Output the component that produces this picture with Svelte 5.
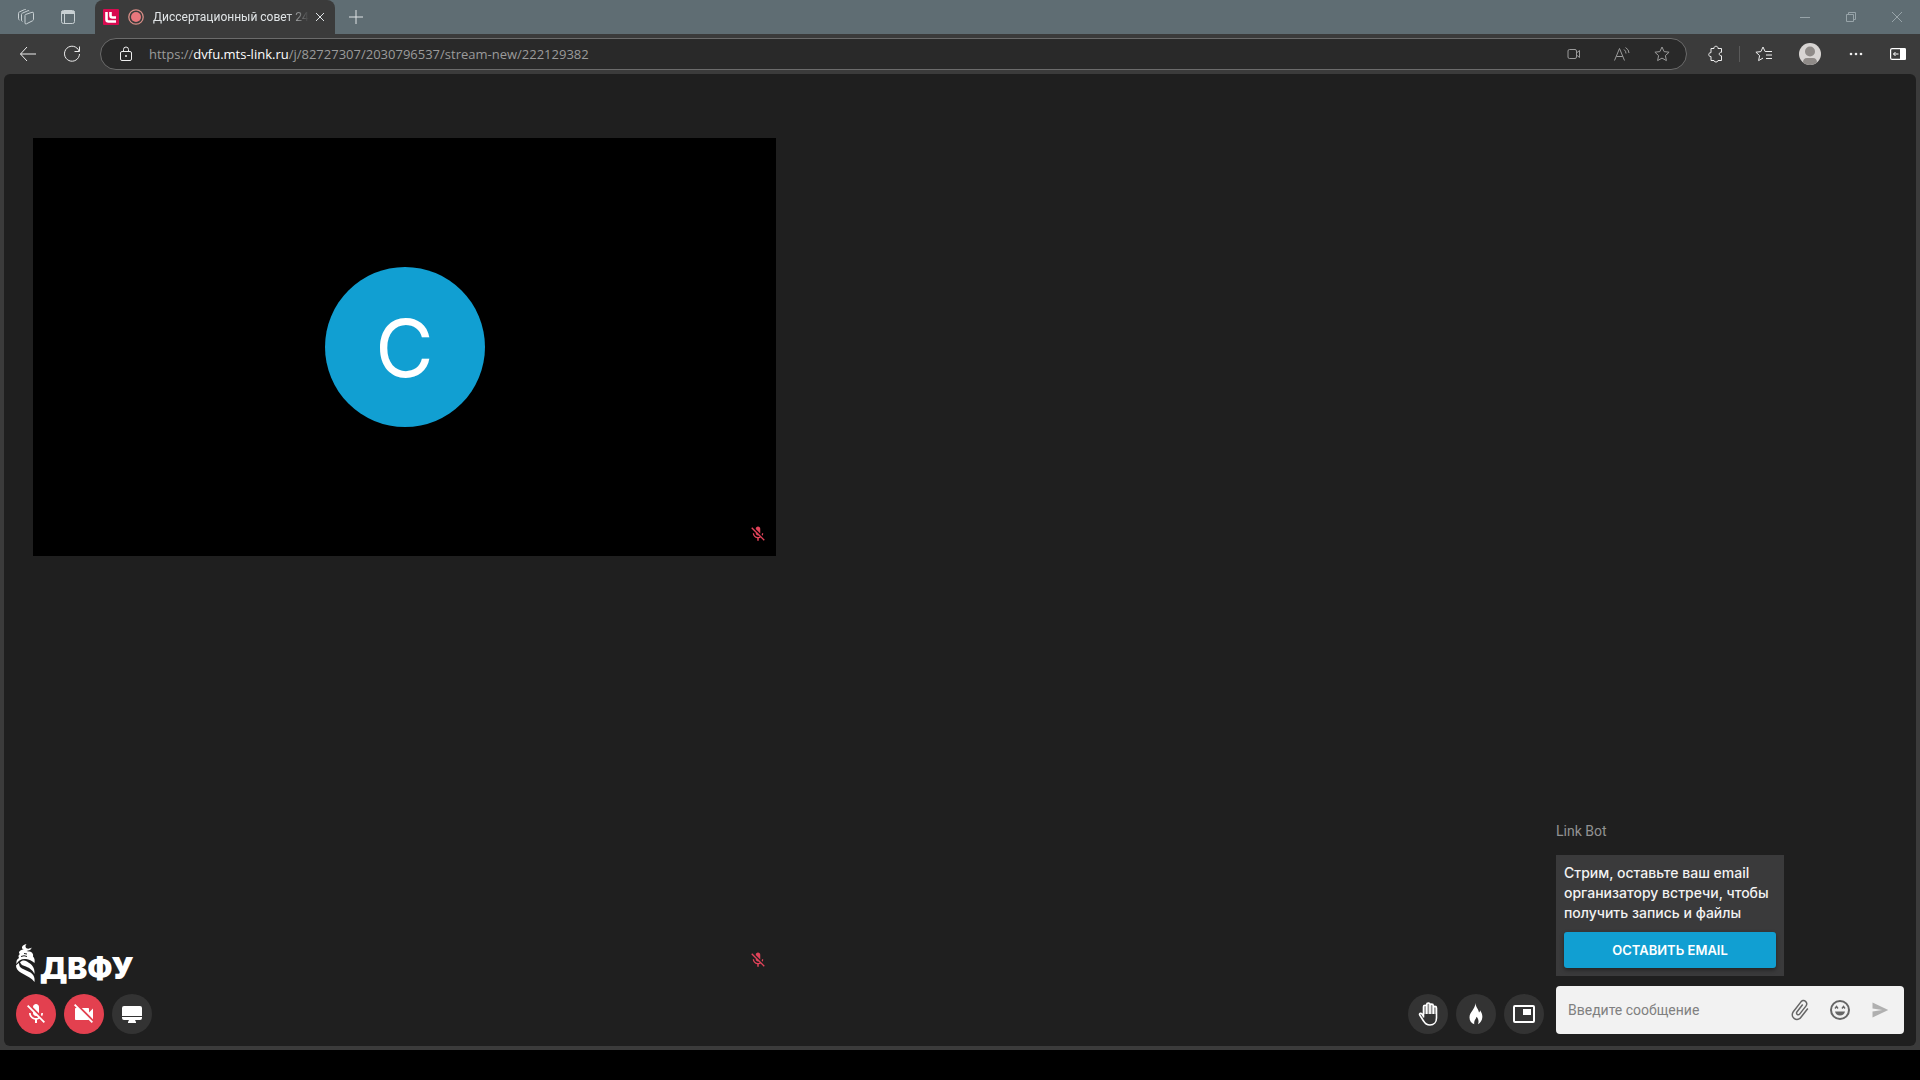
<script>
    let message = $state("");

    const micOff = "M19 11h-1.7c0 .74-.16 1.43-.43 2.05l1.23 1.23c.56-.98.9-2.09.9-3.28zm-4.02.17c0-.06.02-.11.02-.17V5c0-1.66-1.34-3-3-3S9 3.34 9 5v.18l5.98 5.99zM4.27 3L3 4.27l6.01 6.01V11c0 1.66 1.33 3 2.99 3 .22 0 .44-.03.65-.08l1.66 1.66c-.71.33-1.5.52-2.31.52-2.76 0-5.3-2.1-5.3-5.1H5c0 3.41 2.72 6.23 6 6.72V21h2v-3.28c.91-.13 1.77-.45 2.54-.9L19.73 21 21 19.73 4.27 3z";
    const cameraOff = "M21 6.5l-4 4V7c0-.55-.45-1-1-1H9.82L21 17.18V6.5zM3.27 2L2 3.27 4.73 6H4c-.55 0-1 .45-1 1v10c0 .55.45 1 1 1h12c.21 0 .39-.08.54-.18L19.73 21 21 19.73 3.27 2z";
    const clip = "M16.5 6v11.5c0 2.21-1.79 4-4 4s-4-1.79-4-4V5c0-1.38 1.12-2.5 2.5-2.5s2.5 1.12 2.5 2.5v10.5c0 .55-.45 1-1 1s-1-.45-1-1V6H10v9.5c0 1.38 1.12 2.5 2.5 2.5s2.5-1.12 2.5-2.5V5c0-2.21-1.79-4-4-4S7 2.79 7 5v12.5c0 3.04 2.46 5.5 5.5 5.5s5.5-2.46 5.5-5.5V6h-1.5z";
    const star = "M8 1l2.1 4.6 5 .6-3.7 3.4 1 5L8 12.1l-4.4 2.5 1-5L.9 6.2l5-.6z";
</script>

<div class="browser">
    <header class="tabBar">
        <button class="tabTool" aria-label="Workspaces">
            <svg width="18" height="18" viewBox="0 0 18 18" class="line">
                <path d="M8.500 6.500l6.500-2.200q1.500-.5 1.500 1v6q0 1-1 1.500l-6 3q-1.500.7-1.500-1V7.500q0-.7.500-1z"/>
                <path d="M5.500 13.500q-1-.3-1-1.300V6.500q0-1 1-1.400l5.500-2.400q1.200-.4 1.500.5"/>
                <path d="M2.500 12q-1-.3-1-1.300V5.300q0-1 1-1.400l5-2.300q1.200-.4 1.500.3"/>
            </svg>
        </button>
        <button class="tabTool" aria-label="Tab actions">
            <svg width="16" height="16" viewBox="0 0 16 16" class="line">
                <rect x="1.500" y="1.500" width="13" height="13" rx="2"/>
                <path d="M1.500 3.500h13" stroke-width="3"/>
                <path d="M4.500 5v9.500"/>
            </svg>
        </button>

        <div class="tab">
            <svg class="favicon" width="16" height="16" viewBox="0 0 16 16">
                <rect width="16" height="16" rx="1" fill="#d80a50"/>
                <path d="M3.500 3v7.500q0 2 2 2H13M7.500 3v3.500q0 2 2 2H13" fill="none" stroke="#fff" stroke-width="2.600"/>
            </svg>
            <svg class="record" width="16" height="16" viewBox="0 0 16 16">
                <circle cx="8" cy="8" r="7.200" fill="none" stroke="#d78d86" stroke-width="1.300"/>
                <circle cx="8" cy="8" r="5" fill="#e9777d"/>
            </svg>
            <span class="tabTitle">Диссертационный совет 24</span>
            <button class="tabClose" aria-label="Close tab">
                <svg width="10" height="10" viewBox="0 0 10 10" class="line"><path d="M1 1l8 8M9 1l-8 8"/></svg>
            </button>
        </div>

        <button class="newTab" aria-label="New tab">
            <svg width="14" height="14" viewBox="0 0 14 14" class="line"><path d="M7 0v14M0 7h14"/></svg>
        </button>

        <div class="windowButtons">
            <button aria-label="Minimize">
                <svg width="12" height="12" viewBox="0 0 12 12" class="line"><path d="M1 6.500h10"/></svg>
            </button>
            <button aria-label="Restore">
                <svg width="12" height="12" viewBox="0 0 12 12" class="line"><path d="M1.500 3.500h7v7h-7zM3.500 3.500v-2h7v7h-2"/></svg>
            </button>
            <button aria-label="Close">
                <svg width="12" height="12" viewBox="0 0 12 12" class="line"><path d="M1 1l10 10M11 1L1 11"/></svg>
            </button>
        </div>
    </header>

    <nav class="toolbar">
        <button class="navButton" aria-label="Back">
            <svg width="18" height="16" viewBox="0 0 18 16" class="line"><path d="M17 8H1.500M8 1L1.500 8 8 15"/></svg>
        </button>
        <button class="navButton" aria-label="Refresh">
            <svg width="18" height="18" viewBox="0 0 18 18" class="line"><path d="M16 6A7.500 7.500 0 1 0 16.500 9M16.500 1.500V6.500h-5"/></svg>
        </button>

        <div class="address">
            <svg class="lock" width="14" height="16" viewBox="0 0 14 16">
                <rect x="1.500" y="5.500" width="11" height="9" rx="1.500" fill="none" stroke="#eee"/>
                <path d="M4.500 5.500V3.500a2.500 2.500 0 0 1 5 0v2" fill="none" stroke="#eee"/>
                <circle cx="7" cy="10" r="1" fill="#eee"/>
            </svg>
            <div class="url" role="textbox" tabindex="0" aria-label="Address">https://<span>dvfu.mts-link.ru</span>/j/82727307/2030796537/stream-new/222129382</div>
            <button class="camera" aria-label="Camera access">
                <svg width="14" height="12" viewBox="0 0 14 12" class="line">
                    <rect x="1" y="1.500" width="8.500" height="9" rx="1.500"/>
                    <path d="M9.500 5l3-2.500v7l-3-2.500"/>
                </svg>
            </button>
            <button aria-label="Read aloud">
                <svg width="18" height="16" viewBox="0 0 18 16" class="line">
                    <path d="M1.500 14.500L6.500 2.500l5 12M3.300 10.500h6.500M11 3.500q2 1.500 2 4M12.500 1.500q3.500 2 3.500 5.500"/>
                </svg>
            </button>
            <button aria-label="Add to favorites">
                <svg width="16" height="16" viewBox="0 0 16 16" class="line"><path d={star}/></svg>
            </button>
        </div>

        <div class="actions">
            <button aria-label="Extensions">
                <svg width="16" height="18" viewBox="0 0 16 18" class="line">
                    <path d="M3 3.500h3C5.500.5 10.500.5 10 3.500h3.500v3.800c-3-.6-3 4 0 3.500v4.700H10c.3 2-4.300 2-4 0H3v-4c-3 .5-3-4.300 0-3.800z"/>
                </svg>
            </button>
            <i class="divider"></i>
            <button aria-label="Favorites">
                <svg width="18" height="16" viewBox="0 0 18 16" class="line">
                    <path d="M11 5.500h-.9L8 1 5.900 5.600l-5 .6 3.700 3.400-1 5L8 12.100M11 5.500h6M11 9h6M11 12.500h6"/>
                </svg>
            </button>
            <button aria-label="Profile">
                <svg width="22" height="22" viewBox="0 0 22 22">
                    <circle cx="11" cy="11" r="11" fill="#d8d5d3"/>
                    <circle cx="11" cy="8.500" r="5" fill="#8f8b88"/>
                    <path d="M4 19.500q0-4.500 4-4.500h6q4 0 4 4.500a11 11 0 0 1-14 0z" fill="#8f8b88"/>
                </svg>
            </button>
            <button aria-label="Settings and more">
                <svg width="14" height="4" viewBox="0 0 14 4" fill="#eee">
                    <circle cx="2" cy="2" r="1.300"/><circle cx="7" cy="2" r="1.300"/><circle cx="12" cy="2" r="1.300"/>
                </svg>
            </button>
            <button class="sidebarToggle" aria-label="Sidebar">
                <svg width="16" height="12" viewBox="0 0 16 12">
                    <rect x=".6" y=".6" width="14.800" height="10.800" rx="1.500" fill="none" stroke="#fff" stroke-width="1.200"/>
                    <path d="M10 0h4.500q1.500 0 1.500 1.500v9q0 1.500-1.500 1.500H10z" fill="#fff"/>
                    <path d="M8.500 6h-5M5.500 4l-2 2 2 2" fill="none" stroke="#fff"/>
                </svg>
            </button>
        </div>
    </nav>

    <main class="page">
        <section class="stage">
            <div class="tiles">
                <div class="tile active">
                    <div class="avatar">C</div>
                    <svg class="muted" width="18" height="18" viewBox="0 0 24 24"><path d={micOff}/></svg>
                </div>
                <div class="tile">
                    <svg class="muted" width="18" height="18" viewBox="0 0 24 24"><path d={micOff}/></svg>
                </div>
            </div>

            <div class="logo">
                <svg width="20" height="38" viewBox="0 0 20 38" fill="#fff">
                    <path d="M10.500 0C7 1 5.500 2.500 6 4q.3 1.500 2 1.500C5 5.500 3 7 3 8.500q0 1 1 1.500c-1.500.8-2 2.300-1 4C1 15 0 17 .5 20 2.500 16 6 14.500 10 15c3 .4 6 1.500 8.500 4 .5-3 0-5-1.500-6.500.5-2-.3-3.500-2-4.500-1.500-.8-3-.5-4.500-1 2.500-.5 5-1 5-3.500-1.500 1.500-4 1.500-5.500.5Q8.500 2 10.500 0z"/>
                    <path d="M0 21.500c0 3.500 2 5.500 5.500 7.500l8 4.500q3 1.500 5 4.500c.5-4-.5-7-4-9.500L6 24.500Q3 23 3 19 1 20 0 21.500z"/>
                    <path d="M4 18.500c2-2.500 4.500-2.500 7-1 5 3 8 6 7.500 12.500-2.500-5-6-6.500-10-8Q5 21 4 18.500z"/>
                    <path d="M5 12.500q3-1.500 6 0M8 9.500l3 .5" fill="none" stroke="#1f1f1f"/>
                </svg>
                <span>ДВФУ</span>
            </div>

            <div class="controls">
                <button class="round off" aria-label="Включить микрофон">
                    <svg width="24" height="24" viewBox="0 0 24 24"><path d={micOff}/></svg>
                </button>
                <button class="round off" aria-label="Включить камеру">
                    <svg width="24" height="24" viewBox="0 0 24 24"><path d={cameraOff}/></svg>
                </button>
                <button class="round" aria-label="Демонстрация экрана">
                    <svg width="24" height="24" viewBox="0 0 24 24">
                        <path d="M4 4h16q2 0 2 2v8H2V6q0-2 2-2zM2 15h20v1q0 2-2 2h-5l1 2v1H8v-1l1-2H4q-2 0-2-2z"/>
                    </svg>
                </button>

                <button class="round push" aria-label="Поднять руку">
                    <svg width="24" height="24" viewBox="0 0 24 24">
                        <path d="M7.500 12V4.500a2 2 0 0 1 3-1.500 2 2 0 0 1 4-.500 2 2 0 0 1 3 1.800 2 2 0 0 1 3 1.700v6z" opacity=".45"/>
                        <path class="handLine" d="M7.500 15.500V4.800a1.600 1.600 0 0 1 3.200 0V12M10.700 12V2.600a1.600 1.600 0 0 1 3.300 0V12M14 12V3.800a1.600 1.600 0 0 1 3.300 0V12M17.300 12V6a1.600 1.600 0 0 1 3.200 0v10c0 4.200-2.700 7-6.500 7-3 0-5-1.300-6.300-3.800l-4-6.200c-.6-1.200.9-2.300 2-1.300l1.800 2.500"/>
                    </svg>
                </button>
                <button class="round" aria-label="Реакции">
                    <svg width="24" height="24" viewBox="0 0 24 24">
                        <path d="M11.500 1c.2 4.500 3 5.500 3.500 9.500.8-.4 1-1.200 1-2.200 1.600 2 2.600 4.500 2.300 7.200-.2 3-1.600 5-4.300 6.800 1-2.600.6-5.300-1.500-7.500-.3 2.500-3 3.600-2.200 7.500C7.300 21 5.500 19 5.500 15.500 5.500 10 11 7.500 11.500 1z"/>
                    </svg>
                </button>
                <button class="round" aria-label="Картинка в картинке">
                    <svg width="24" height="24" viewBox="0 0 24 24">
                        <rect x="2" y="4" width="20" height="16" rx="1" fill="none" stroke="#fff" stroke-width="2"/>
                        <path d="M11 7h8v6h-8z"/>
                    </svg>
                </button>
            </div>
        </section>

        <aside class="chat">
            <div class="sender">Link Bot</div>
            <div class="bubble">
                <p>Стрим, оставьте ваш email организатору встречи, чтобы получить запись и файлы</p>
                <button class="emailButton">ОСТАВИТЬ EMAIL</button>
            </div>

            <form class="messageForm" onsubmit={(e)=>{e.preventDefault()}}>
                <input
                    type="text"
                    bind:value={message}
                    placeholder="Введите сообщение"
                    aria-label="Введите сообщение"
                >
                <button type="button" aria-label="Прикрепить файл">
                    <svg width="24" height="24" viewBox="0 0 24 24"><path d={clip} transform="rotate(38 12 12)"/></svg>
                </button>
                <button type="button" aria-label="Эмодзи">
                    <svg width="24" height="24" viewBox="0 0 24 24">
                        <circle cx="12" cy="12" r="9" fill="none" stroke="#666" stroke-width="2"/>
                        <path d="M7 13.500h10q-1 4-5 4t-5-4z"/>
                        <path d="M7 10.500l1.500-2 1.500 2M14 10.500l1.500-2 1.500 2" fill="none" stroke="#666" stroke-width="1.400"/>
                    </svg>
                </button>
                <button class="send" aria-label="Отправить">
                    <svg width="18" height="18" viewBox="0 0 24 24"><path d="M2 22l21-10L2 2v8l13 2-13 2z"/></svg>
                </button>
            </form>
        </aside>
    </main>
</div>

<style>
    :global(body){
        margin: 0;
        background: #000;
    }

    .browser{
        display: flex;
        flex-direction: column;
        box-sizing: border-box;
        height: calc(100vh - 30px);
        background: #3b3b3b;
        font-family: "Open Sans", "Noto Sans", sans-serif;
    }

    button{
        display: flex;
        align-items: center;
        justify-content: center;
        flex-shrink: 0;
        padding: 0;
        border: none;
        background: none;
        color: inherit;
        font-family: inherit;
    }

    svg{
        display: block;
        flex-shrink: 0;
    }

    .line{
        fill: none;
        stroke: currentColor;
        stroke-linejoin: round;
    }

    /* Tab bar */
    .tabBar{
        display: flex;
        height: 34px;
        padding-left: 5px;
        background: #5f6d73;
        color: #e0e4e6;
    }

    .tabTool{
        width: 42px;
        color: #c8d0d3;
    }

    .tab{
        display: flex;
        align-items: center;
        box-sizing: border-box;
        width: 240px;
        margin-left: 6px;
        padding: 0 8px;
        border-radius: 8px 8px 0 0;
        background: #3b3b3b;
    }

    .record{
        margin: 0 9px;
    }

    .tabTitle{
        flex: 1;
        font-family: Roboto, sans-serif;
        font-size: 12px;
        line-height: 16px;
        white-space: nowrap;
        mask-image: linear-gradient(to right, #000 86%, transparent);
    }

    .tabClose{
        width: 14px;
        margin-left: 4px;
    }

    .newTab{
        width: 42px;
    }

    .windowButtons{
        display: flex;
        margin-left: auto;
        color: #98a4a9;
    }

    .windowButtons button{
        width: 46px;
    }

    /* Toolbar */
    .toolbar{
        display: flex;
        align-items: center;
        height: 40px;
        padding: 0 3px 0 12px;
        color: #eee;
    }

    .navButton{
        width: 32px;
        height: 32px;
        margin-right: 12px;
    }

    .address{
        display: flex;
        flex: 1;
        align-items: center;
        box-sizing: border-box;
        height: 32px;
        padding: 0 4px 0 18px;
        border: 1px solid #6b6b6b;
        border-radius: 16px;
        background: #292929;
        color: #9b9b9b;
    }

    .address button{
        width: 40px;
        height: 28px;
    }

    .address .camera{
        width: 56px;
    }

    .url{
        flex: 1;
        margin-left: 16px;
        font-size: 13px;
        line-height: 20px;
        white-space: nowrap;
    }

    .url span{
        color: #fff;
        font-weight: 500;
    }

    .actions{
        display: flex;
        align-items: center;
        margin-left: 6px;
    }

    .actions button{
        width: 46px;
        height: 32px;
    }

    .actions .sidebarToggle{
        width: 38px;
    }

    .divider{
        width: 1px;
        height: 16px;
        margin-right: 1px;
        background: #5a5a5a;
    }

    /* Meeting */
    .page{
        display: flex;
        flex: 1;
        min-height: 0;
        margin: 0 4px 4px;
        border-radius: 6px;
        background: #1f1f1f;
        font-family: Roboto, "Liberation Sans", sans-serif;
    }

    .stage{
        display: flex;
        flex: 1;
        flex-direction: column;
        position: relative;
        padding: 64px 12px 12px;
    }

    .tiles{
        display: flex;
        flex: 1;
        flex-direction: column;
        align-items: flex-start;
        gap: 8px;
        min-height: 0;
        margin-left: 17px;
    }

    .tile{
        display: flex;
        flex: 1;
        align-items: center;
        justify-content: center;
        position: relative;
        min-height: 0;
        aspect-ratio: 16 / 9;
    }

    .tile.active{
        background: #000;
    }

    .avatar{
        display: flex;
        align-items: center;
        justify-content: center;
        width: 160px;
        height: 160px;
        border-radius: 50%;
        background: #119fd2;
        color: #fff;
        font-family: Inter, Roboto, sans-serif;
        font-size: 80px;
    }

    .muted{
        position: absolute;
        right: 9px;
        bottom: 13px;
        fill: #e2435a;
    }

    /* Sits over the bottom tile */
    .logo{
        display: flex;
        align-items: flex-end;
        gap: 4px;
        position: absolute;
        bottom: 64px;
        left: 12px;
        color: #fff;
        font-family: Inter, sans-serif;
        font-size: 30px;
        font-weight: 900;
        line-height: 28px;
    }

    .controls{
        display: flex;
        gap: 8px;
        margin-top: 12px;
    }

    .round{
        width: 40px;
        height: 40px;
        border-radius: 50%;
        background: #333;
        fill: #fff;
    }

    .round.off{
        background: #e3404f;
    }

    .round.push{
        margin-left: auto;
    }

    .handLine{
        fill: none;
        stroke: #fff;
        stroke-width: 1.6;
        stroke-linejoin: round;
    }

    /* Chat */
    .chat{
        display: flex;
        flex-direction: column;
        justify-content: flex-end;
        width: 348px;
        padding: 0 12px 12px 0;
    }

    .sender{
        margin-bottom: 14px;
        color: #929292;
        font-size: 14px;
        line-height: 20px;
    }

    .bubble{
        box-sizing: border-box;
        width: 228px;
        padding: 8px;
        background: #3a3a3b;
        color: #f2f2f2;
        font-family: Inter, Roboto, sans-serif;
        font-size: 14px;
        font-weight: 500;
        line-height: 20px;
    }

    .bubble p{
        margin: 0 0 9px;
    }

    .emailButton{
        width: 100%;
        height: 36px;
        border-radius: 3px;
        background: #119fd2;
        box-shadow: 0 2px 4px rgba(0, 0, 0, 0.4);
        color: #fff;
        font-size: 13px;
        font-weight: 600;
    }

    .messageForm{
        display: flex;
        align-items: center;
        height: 48px;
        margin-top: 10px;
        padding-right: 4px;
        border-radius: 4px;
        background: #f2f2f2;
    }

    .messageForm input{
        flex: 1;
        min-width: 0;
        padding: 0 12px;
        border: none;
        outline: none;
        background: none;
        font-family: inherit;
        font-size: 14px;
    }

    .messageForm input::placeholder{
        color: #808080;
    }

    .messageForm button{
        width: 40px;
        height: 40px;
        fill: #666;
    }

    .messageForm .send{
        fill: #b0b0b0;
    }
</style>
